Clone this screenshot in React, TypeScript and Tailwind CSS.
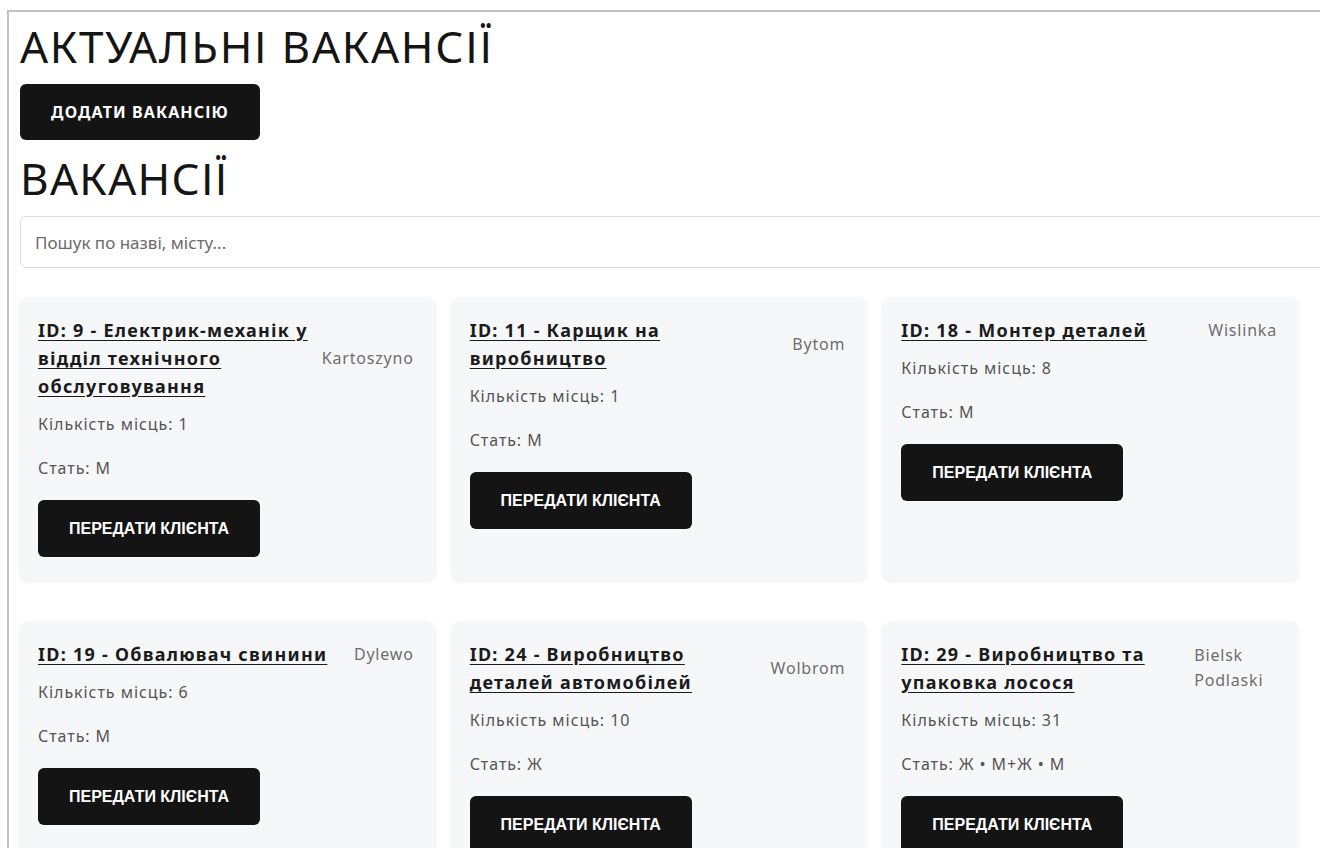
import React from "react";

type Vacancy = {
  id: number;
  title: string;
  city: string;
  places: number;
  gender: string;
};

const vacancies: Vacancy[] = [
  { id: 9, title: "Електрик-механік у відділ технічного обслуговування", city: "Kartoszyno", places: 1, gender: "М" },
  { id: 11, title: "Карщик на виробництво", city: "Bytom", places: 1, gender: "М" },
  { id: 18, title: "Монтер деталей", city: "Wislinka", places: 8, gender: "М" },
  { id: 19, title: "Обвалювач свинини", city: "Dylewo", places: 6, gender: "М" },
  { id: 24, title: "Виробництво деталей автомобілей", city: "Wolbrom", places: 10, gender: "Ж" },
  { id: 29, title: "Виробництво та упаковка лосося", city: "Bielsk Podlaski", places: 31, gender: "Ж • М+Ж • М" },
];

function VacancyCard({ v }: { v: Vacancy }) {
  return (
    <div className="rounded-lg bg-[#f6f7f9] p-[18px] pb-[23px] pr-[21px] shadow-[0_1px_4px_rgba(0,0,0,0.09)]">
      <div className="flex items-center justify-between gap-2">
        <a
          href="#"
          className="text-[18px] font-bold leading-[28px] tracking-[0.07em] text-[#1b1b1b] underline underline-offset-[3px]"
        >
          {`ID: ${v.id} - ${v.title}`}
        </a>
        <span className="text-[16px] leading-[25px] tracking-[0.05em] text-[#6e6e6e]">{v.city}</span>
      </div>
      <p className="mt-[14px] text-[16px] leading-[20px] tracking-[0.06em] text-[#555]">
        {`Кількість місць: ${v.places}`}
      </p>
      <p className="mt-[24px] text-[16px] leading-[20px] tracking-[0.06em] text-[#555]">
        {`Стать: ${v.gender}`}
      </p>
      <button className="mt-[22px] flex h-[57px] w-[222px] items-center justify-center rounded-md bg-[#141414] font-['Liberation_Sans',sans-serif] text-[16px] font-bold text-white">
        ПЕРЕДАТИ КЛІЄНТА
      </button>
    </div>
  );
}

export default function App() {
  return (
    <div className="h-[848px] w-[1320px] overflow-hidden bg-white font-['Noto_Sans',sans-serif]">
      <div className="ml-[7px] mt-[10px] min-h-[900px] w-[1400px] border-l-2 border-t-2 border-[#c3c3c3] pl-[11px] pt-[12px]">
        <h1 className="text-[44px] font-normal leading-[44px] tracking-[0.04em] text-[#151515]">
          АКТУАЛЬНІ ВАКАНСІЇ
        </h1>
        <button className="mt-[16px] flex h-[56px] w-[240px] items-center justify-center rounded-md bg-[#141414] text-[16px] font-bold tracking-[0.07em] text-white">
          ДОДАТИ ВАКАНСІЮ
        </button>
        <h2 className="mt-[16px] text-[44px] font-normal leading-[44px] tracking-[0.03em] text-[#151515]">
          ВАКАНСІЇ
        </h2>
        <div className="mt-[16px] w-[1380px]">
          <input
            type="text"
            placeholder="Пошук по назві, місту..."
            className="h-[52px] w-full rounded-md border border-[#dedede] bg-white px-[14px] text-[17px] text-[#222] outline-none placeholder:text-[#6b6b6b]"
          />
        </div>
        <div className="mt-[30px] grid w-[1278px] grid-cols-3 gap-x-[17px] gap-y-[42px]">
          {vacancies.map((v) => (
            <VacancyCard key={v.id} v={v} />
          ))}
        </div>
      </div>
    </div>
  );
}
